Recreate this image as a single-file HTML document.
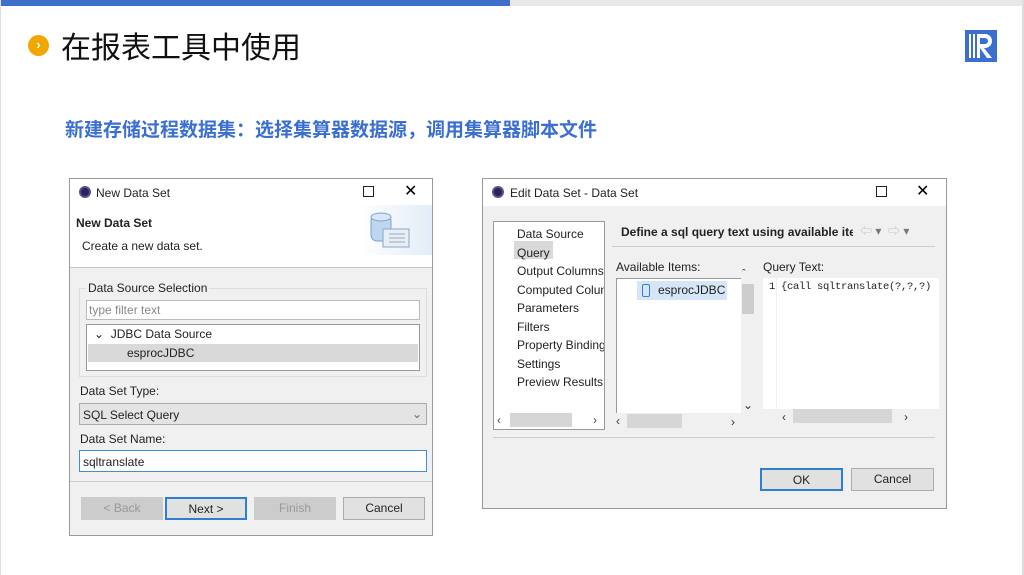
<!DOCTYPE html>
<html><head><meta charset="utf-8"><style>
*{box-sizing:border-box;margin:0;padding:0}
body{width:1024px;height:575px;background:#fff;position:relative;overflow:hidden;font-family:"Liberation Sans","Noto Sans CJK SC",sans-serif}
.a{position:absolute}
.t{font-size:12px;color:#222;white-space:nowrap;line-height:14px}
.btn{position:absolute;border:1px solid #adadad;background:#e1e1e1;font-size:12px;text-align:center;line-height:20px;color:#222}
</style></head><body>
<div class="a" style="left:0;top:0;width:1024px;height:6px;background:#e8e8e8"></div>
<div class="a" style="left:0;top:0;width:510px;height:6px;background:#3e6fcb"></div>
<div class="a" style="left:0;top:0;width:1px;height:575px;background:#ddd"></div>
<div class="a" style="left:1022px;top:0;width:2px;height:575px;background:#ddd"></div>
<div class="a" style="left:28px;top:35px;width:21px;height:21px;border-radius:50%;background:#f0a800;color:#fff;font-size:13px;font-weight:bold;text-align:center;line-height:20px">›</div>
<div class="a" style="left:61px;top:26px;font-size:30px;line-height:38px;color:#111;font-family:'Noto Sans CJK SC',sans-serif">在报表工具中使用</div>
<svg class="a" style="left:965px;top:30px" width="32" height="32" viewBox="0 0 32 32"><rect width="32" height="32" fill="#3a6fcf"/><rect x="4" y="4" width="2" height="24" fill="#fff"/><rect x="8" y="4" width="2" height="24" fill="#fff"/><path d="M12 4h8a7 7 0 0 1 0 14h-1l8 10h-5l-7-10v10h-3z" fill="#fff"/><path d="M15 8h5a3 3 0 0 1 0 6h-5z" fill="#3a6fcf"/></svg>
<div class="a" style="left:65px;top:117px;font-size:19px;line-height:24px;font-weight:bold;color:#3a6fd0;font-family:'Noto Sans CJK SC',sans-serif;white-space:nowrap">新建存储过程数据集：选择集算器数据源，调用集算器脚本文件</div>

<!-- left dialog -->
<div class="a" style="left:69px;top:178px;width:364px;height:358px;border:1px solid #999;background:#f0f0f0"></div>
<div class="a" style="left:70px;top:179px;width:362px;height:89px;background:#fff;border-bottom:1px solid #c8c8c8"></div>
<div class="a" style="left:360px;top:205px;width:72px;height:50px;background:linear-gradient(90deg,#fff,#e3ecf7)"></div>
<div class="a" style="left:79px;top:186px;width:12px;height:12px;border-radius:50%;background:#2c2255;border:2px solid #5b4f93"></div>
<div class="a t" style="left:96px;top:186px">New Data Set</div>
<div class="a" style="left:363px;top:186px;width:11px;height:11px;border:1px solid #222"></div>
<div class="a" style="left:404px;top:181px;font-size:16px">✕</div>
<div class="a t" style="left:76px;top:216px;font-weight:bold">New Data Set</div>
<div class="a t" style="left:82px;top:239px">Create a new data set.</div>
<svg class="a" style="left:369px;top:211px" width="42" height="40"><rect x="2" y="4" width="20" height="26" rx="6" fill="#bfd6f0" stroke="#7aa2cf"/><ellipse cx="12" cy="6" rx="10" ry="4" fill="#d8e8f8" stroke="#7aa2cf"/><rect x="14" y="18" width="26" height="18" fill="#e8eef6" stroke="#8aa6c8"/><path d="M20 23h16M20 27h16M20 31h16" stroke="#9ab"/></svg>
<div class="a" style="left:79px;top:288px;width:348px;height:89px;border:1px solid #dcdcdc"></div>
<div class="a t" style="left:86px;top:281px;background:#f0f0f0;padding:0 2px">Data Source Selection</div>
<div class="a" style="left:86px;top:300px;width:334px;height:20px;background:#fff;border:1px solid #bbb"></div>
<div class="a t" style="left:89px;top:303px;color:#888">type filter text</div>
<div class="a" style="left:86px;top:324px;width:334px;height:47px;background:#fff;border:1px solid #999"></div>
<div class="a" style="left:88px;top:344px;width:330px;height:18px;background:#d9d9d9"></div>
<div class="a t" style="left:94px;top:327px">⌄ &nbsp;JDBC Data Source</div>
<div class="a t" style="left:127px;top:346px">esprocJDBC</div>
<div class="a t" style="left:80px;top:384px">Data Set Type:</div>
<div class="a" style="left:79px;top:403px;width:348px;height:22px;background:#e4e4e4;border:1px solid #aaa"></div>
<div class="a t" style="left:83px;top:408px">SQL Select Query</div>
<div class="a t" style="left:412px;top:407px;color:#666">⌄</div>
<div class="a t" style="left:80px;top:432px">Data Set Name:</div>
<div class="a" style="left:79px;top:450px;width:348px;height:22px;background:#fff;border:1px solid #3c8fd8"></div>
<div class="a t" style="left:83px;top:455px">sqltranslate</div>
<div class="a" style="left:70px;top:481px;width:362px;height:1px;background:#ccc"></div>
<div class="btn" style="left:81px;top:497px;width:82px;height:23px;color:#999;border-color:#ccc;background:#ccc">&lt; Back</div>
<div class="btn" style="left:165px;top:497px;width:82px;height:23px;border:2px solid #2f7fd0">Next &gt;</div>
<div class="btn" style="left:254px;top:497px;width:82px;height:23px;color:#999;border-color:#ccc;background:#ccc">Finish</div>
<div class="btn" style="left:343px;top:497px;width:82px;height:23px">Cancel</div>

<!-- right dialog -->
<div class="a" style="left:482px;top:178px;width:465px;height:331px;border:1px solid #999;background:#f0f0f0"></div>
<div class="a" style="left:483px;top:179px;width:463px;height:27px;background:#fff"></div>
<div class="a" style="left:492px;top:186px;width:12px;height:12px;border-radius:50%;background:#2c2255;border:2px solid #5b4f93"></div>
<div class="a t" style="left:510px;top:186px">Edit Data Set - Data Set</div>
<div class="a" style="left:876px;top:186px;width:11px;height:11px;border:1px solid #222"></div>
<div class="a" style="left:916px;top:181px;font-size:16px">✕</div>
<div class="a" style="left:493px;top:221px;width:112px;height:209px;background:#fff;border:1px solid #999;overflow:hidden">
<div class="a" style="left:20px;top:19px;width:39px;height:18px;background:#d9d9d9"></div>
<div class="a t" style="left:23px;top:3px;line-height:18.5px">Data Source<br>Query<br>Output Columns<br>Computed Columns<br>Parameters<br>Filters<br>Property Binding<br>Settings<br>Preview Results</div>
<div class="a" style="left:16px;top:191px;width:62px;height:14px;background:#d6d6d6"></div>
<div class="a t" style="left:3px;top:191px;color:#444">‹</div><div class="a t" style="left:99px;top:191px;color:#444">›</div>
</div>
<div class="a t" style="left:621px;top:225px;font-weight:bold;width:232px;overflow:hidden">Define a sql query text using available items</div>
<div class="a t" style="left:860px;top:224px;color:#bbb">⇦ <span style="color:#777">▾</span> &nbsp;⇨ <span style="color:#777">▾</span></div>
<div class="a" style="left:612px;top:246px;width:323px;height:1px;background:#ccc"></div>
<div class="a t" style="left:616px;top:260px">Available Items:</div>
<div class="a" style="left:616px;top:278px;width:125px;height:135px;background:#fff;border-left:1px solid #999;border-top:1px solid #999"></div>
<div class="a" style="left:637px;top:281px;width:90px;height:19px;background:#d5e6f7"></div>
<div class="a" style="left:642px;top:284px;width:8px;height:13px;border:1.5px solid #3a7fd5;border-radius:2px"></div>
<div class="a t" style="left:658px;top:283px">esprocJDBC</div>
<div class="a" style="left:742px;top:270px;width:13px;height:143px;background:#f0f0f0"></div>
<div class="a" style="left:742px;top:268px;font-size:11px;color:#333">ˆ</div>
<div class="a" style="left:742px;top:284px;width:12px;height:30px;background:#cdcdcd"></div>
<div class="a t" style="left:743px;top:398px;color:#333">⌄</div>
<div class="a" style="left:616px;top:413px;width:124px;height:14px;background:#f0f0f0"></div>
<div class="a" style="left:627px;top:414px;width:55px;height:14px;background:#d6d6d6"></div>
<div class="a t" style="left:616px;top:414px;color:#333">‹</div>
<div class="a t" style="left:731px;top:415px;color:#333">›</div>
<div class="a t" style="left:763px;top:260px">Query Text:</div>
<div class="a" style="left:763px;top:278px;width:176px;height:131px;background:#fff"></div>
<div class="a" style="left:776px;top:278px;width:1px;height:131px;background:#f0f0f0"></div>
<div class="a t" style="left:769px;top:280px;font-family:'Liberation Mono',monospace;font-size:10.5px;letter-spacing:-0.3px">1 {call sqltranslate(?,?,?)</div>
<div class="a" style="left:793px;top:409px;width:99px;height:14px;background:#d6d6d6"></div>
<div class="a t" style="left:782px;top:410px;color:#333">‹</div>
<div class="a t" style="left:904px;top:410px;color:#333">›</div>
<div class="a" style="left:493px;top:437px;width:442px;height:1px;background:#ccc"></div>
<div class="btn" style="left:760px;top:468px;width:83px;height:23px;border:2px solid #2f7fd0">OK</div>
<div class="btn" style="left:851px;top:468px;width:83px;height:23px">Cancel</div>
</body></html>
